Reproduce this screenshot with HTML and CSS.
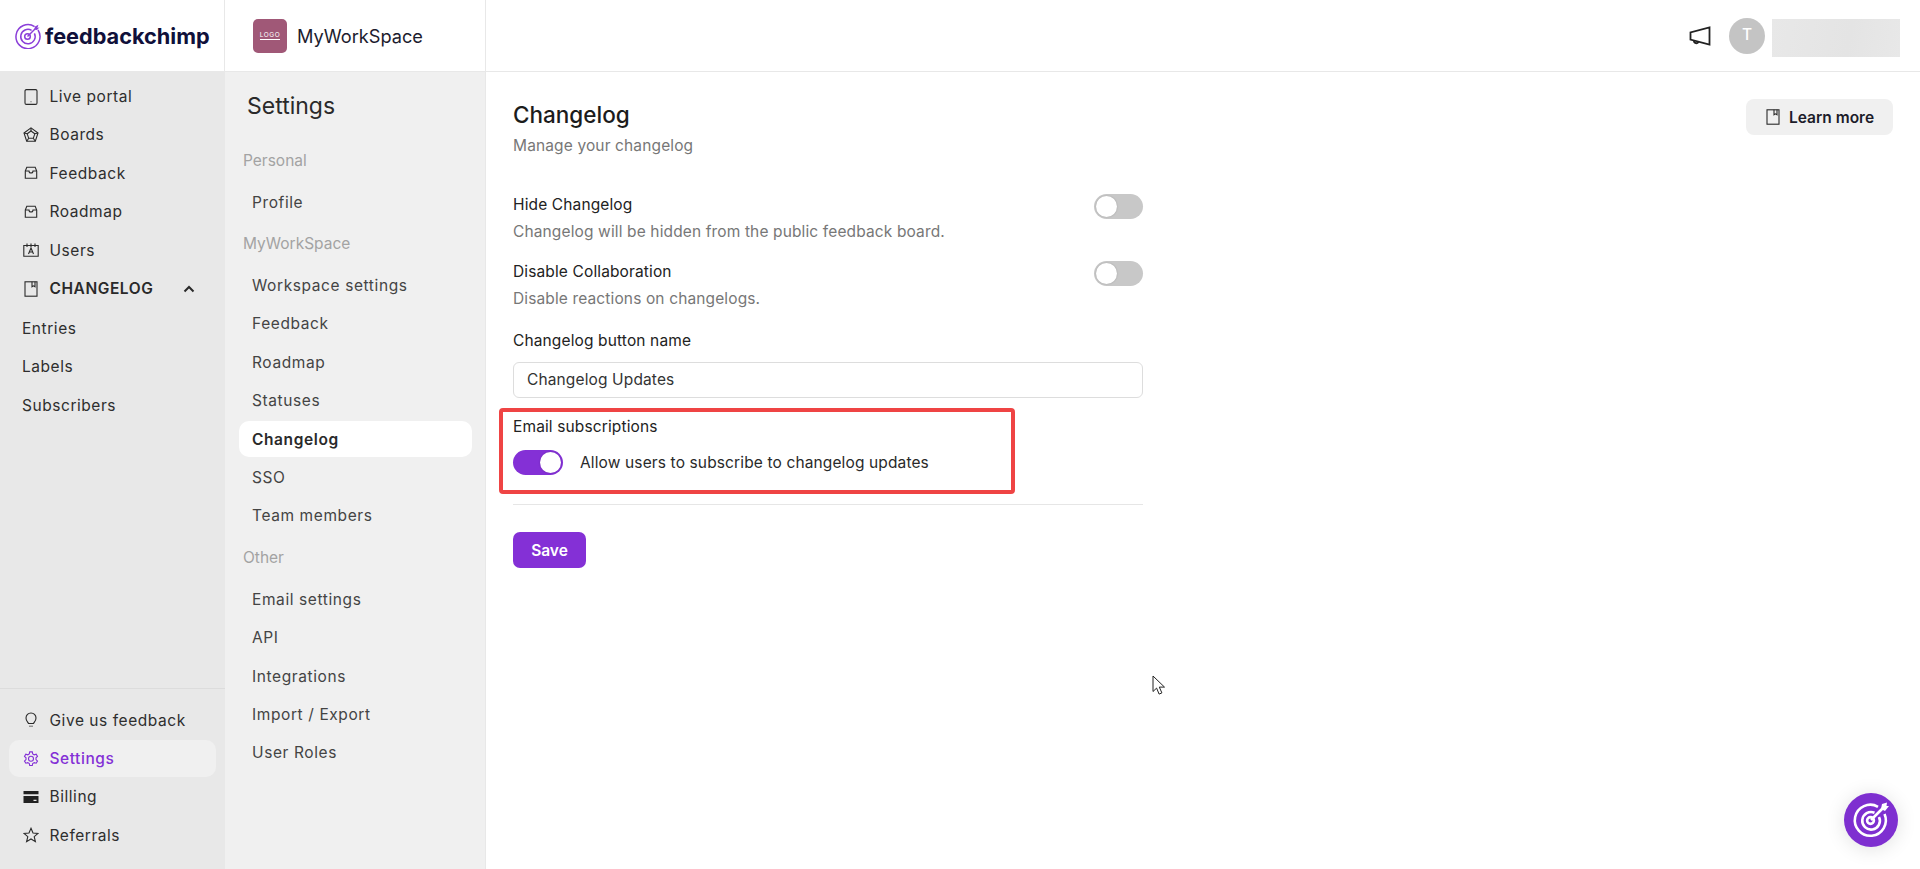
FILE: index.html
```html
<!DOCTYPE html>
<html lang="en">
<head>
<meta charset="utf-8">
<title>Settings - Changelog</title>
<link rel="stylesheet" href="styles.css">
</head>
<body>
<div class="app">
  <aside class="rail">
    <div class="brand">
      <svg class="brand-icon" viewBox="0 0 26 26" fill="none" stroke="#8b3fd9">
        <path d="M19.6 3.6A12 12 0 1 0 23 7" stroke-width="1.5"/>
        <path d="M16.6 7.4A7.2 7.2 0 1 0 19.4 10.4" stroke-width="1.5"/>
        <circle cx="12.5" cy="13.5" r="2.8" stroke-width="1.5"/>
        <path d="M12.5 13.5 21 5" stroke-width="1.5"/>
        <path d="M20 3.4 23.4 1.8 22.4 5 24.6 4.2 22 7 19.4 6.6Z" fill="#8b3fd9" stroke="none"/>
      </svg>
      <span class="brand-name">feedbackchimp</span>
    </div>
    <nav class="rail-nav">
      <a class="rail-item"><svg class="ic" viewBox="0 0 16 16"><rect x="2" y="0.600" width="12" height="14.800" rx="1.400"/><path d="M7.600 12.800h.8"/></svg>Live portal</a>
      <a class="rail-item"><svg class="ic" viewBox="0 0 16 16"><path d="M8 .9 15 6l-2.700 8.200H3.700L1 6Z"/><path d="M8 4 11.800 6.800 10.300 11.300H5.700L4.200 6.800Z"/><path d="M8 .9V4M15 6 11.800 6.800M12.300 14.200 10.300 11.300M3.700 14.200 5.700 11.300M1 6 4.200 6.800"/></svg>Boards</a>
      <a class="rail-item"><svg class="ic" viewBox="0 0 16 16"><path d="M2.300 6 3.800 2.200h8.400L13.700 6v7.300H2.300Z"/><path d="M2.300 6H6a2 2 0 0 0 4 0h3.700"/></svg>Feedback</a>
      <a class="rail-item"><svg class="ic" viewBox="0 0 16 16"><path d="M2.300 6 3.800 2.200h8.400L13.700 6v7.300H2.300Z"/><path d="M2.300 6H6a2 2 0 0 0 4 0h3.700"/></svg>Roadmap</a>
      <a class="rail-item"><svg class="ic" viewBox="0 0 16 16"><path d="M.8 3.500h14.400v10.800H.8Z"/><path d="M4 1.500v3.500M8 1.500v3.500M12 1.500v3.500"/><path d="M5.500 12 8 6l2.500 6M6.400 10h3.200"/></svg>Users</a>
      <a class="rail-item rail-head"><svg class="ic" viewBox="0 0 16 16"><rect x="2" y="0.800" width="12" height="14.400"/><path d="M9 .8v5l1.500-1 1.500 1v-5"/></svg>CHANGELOG<svg class="chev" viewBox="0 0 12 8"><path d="M1.500 6.500 6 2l4.500 4.500"/></svg></a>
      <a class="rail-item rail-sub rail-sub-first">Entries</a>
      <a class="rail-item rail-sub">Labels</a>
      <a class="rail-item rail-sub">Subscribers</a>
    </nav>
    <nav class="rail-nav rail-bottom">
      <a class="rail-item"><svg class="ic" viewBox="0 0 16 16"><path d="M5.500 11.500C4.800 10 3 9 3 6a5 5 0 0 1 10 0c0 3-1.800 4-2.500 5.500Z"/><path d="M6 14.200h4" stroke="#777"/></svg>Give us feedback</a>
      <a class="rail-item is-active"><svg class="ic" viewBox="0 0 16 16"><path d="M6.700.9h2.600l.4 2 1.500.9 2-.6 1.300 2.200-1.500 1.400v1.800l1.500 1.400-1.300 2.200-2-.6-1.500.9-.4 2H6.700l-.4-2-1.500-.9-2 .6-1.300-2.200 1.500-1.400V6.800L1.500 5.400l1.300-2.200 2 .6 1.500-.9Z"/><circle cx="8" cy="7.700" r="2.500"/></svg>Settings</a>
      <a class="rail-item"><svg class="ic ic-fill" viewBox="0 0 16 16"><path d="M.5 2h15v3.300H.5ZM.5 7h15v7H.5Zm10 3.800v1.200h3v-1.200Z" fill-rule="evenodd"/></svg>Billing</a>
      <a class="rail-item"><svg class="ic" viewBox="0 0 16 16"><path d="M8 1.300 10 6l5 .4-3.800 3.300 1.200 5L8 12l-4.400 2.700 1.200-5L1 6.400 6 6Z"/></svg>Referrals</a>
    </nav>
  </aside>

  <aside class="panel">
    <div class="workspace">
      <div class="ws-logo"><span class="ws-logo-text">LOGO</span></div>
      <span class="ws-name">MyWorkSpace</span>
    </div>
    <div class="panel-body">
      <h2 class="panel-title">Settings</h2>
      <div class="panel-section">Personal</div>
      <a class="panel-item">Profile</a>
      <div class="panel-section">MyWorkSpace</div>
      <a class="panel-item">Workspace settings</a>
      <a class="panel-item">Feedback</a>
      <a class="panel-item">Roadmap</a>
      <a class="panel-item">Statuses</a>
      <a class="panel-item is-active">Changelog</a>
      <a class="panel-item">SSO</a>
      <a class="panel-item">Team members</a>
      <div class="panel-section">Other</div>
      <a class="panel-item">Email settings</a>
      <a class="panel-item">API</a>
      <a class="panel-item">Integrations</a>
      <a class="panel-item">Import / Export</a>
      <a class="panel-item">User Roles</a>
    </div>
  </aside>

  <div class="content">
    <header class="topbar">
      <svg class="megaphone" viewBox="0 0 22 20"><path d="M20.500 1.500v17L1.500 13.500V6.500Z"/><path d="M5 14.500a2.400 2.400 0 0 0 4.600 1.200"/></svg>
      <div class="avatar">T</div>
      <div class="user-blur"></div>
    </header>
    <main class="main">
      <div class="page-head">
        <div>
          <h1 class="page-title">Changelog</h1>
          <p class="page-sub">Manage your changelog</p>
        </div>
        <button class="learn"><svg class="ic" viewBox="0 0 16 16"><rect x="2" y="0.800" width="12" height="14.400"/><path d="M9 .8v5l1.500-1 1.500 1v-5"/></svg>Learn more</button>
      </div>
      <form class="form">
        <div class="setting">
          <div>
            <div class="label">Hide Changelog</div>
            <div class="desc">Changelog will be hidden from the public feedback board.</div>
          </div>
          <span class="toggle"></span>
        </div>
        <div class="setting">
          <div>
            <div class="label">Disable Collaboration</div>
            <div class="desc">Disable reactions on changelogs.</div>
          </div>
          <span class="toggle"></span>
        </div>
        <div class="label field-label">Changelog button name</div>
        <div class="input">Changelog Updates</div>
        <div class="email">
          <div class="label">Email subscriptions</div>
          <div class="email-row">
            <span class="toggle is-on"></span>
            <span class="email-text">Allow users to subscribe to changelog updates</span>
          </div>
          <div class="highlight"></div>
        </div>
        <hr class="divider">
        <button class="save" type="button">Save</button>
      </form>
    </main>
  </div>
</div>
<svg class="cursor" viewBox="0 0 14 21"><path d="M1 1v15.500l3.600-3.400 2.500 6 2.800-1.200-2.600-5.800H12.500Z"/></svg>
<div class="chat">
  <svg viewBox="0 0 54 54" fill="none" stroke="#fff" stroke-width="2.600">
    <path d="M34 13.800A15.500 15.500 0 1 0 40.500 21"/>
    <path d="M30.500 19.700A8.800 8.800 0 1 0 35 24"/>
    <circle cx="26.500" cy="27.500" r="3.400"/>
    <path d="M27 27 39 15"/>
    <path d="M38 11 43 9.500 42.500 13 45 13 41 18 37 16Z" fill="#fff" stroke="none"/>
  </svg>
</div>
</body>
</html>
```

FILE: styles.css
```css
* { box-sizing: border-box; }
html, body { margin: 0; height: 100%; overflow: hidden; }
body {
  font-family: Inter, "Noto Sans", sans-serif;
  color: #2a2a2a;
  background: #fff;
}
.app { display: flex; height: 869px; }

/* Left rail */
.rail { width: 225px; flex: none; display: flex; flex-direction: column; background: #e8e8e8; }
.brand {
  height: 72px; flex: none; display: flex; align-items: center; gap: 4px;
  padding-left: 15px; background: #fff; border-bottom: 1px solid #e8e8e8; border-right: 1px solid #e8e8e8;
}
.brand-icon { width: 26px; height: 26px; flex: none; }
.brand-name { font-size: 21.700px; font-weight: 700; color: #10103a; letter-spacing: 0; }
.rail-nav { display: flex; flex-direction: column; gap: 2px; padding: 6.400px 9px 0; }
.rail-bottom { margin-top: auto; border-top: 1px solid #dcdcdc; padding-top: 13px; padding-bottom: 15.500px; }
.rail-item {
  height: 36.400px; display: flex; align-items: center; gap: 10.500px; padding-left: 14px;
  font-size: 15.500px; letter-spacing: .55px; color: #2e2e2e; border-radius: 10px;
}
.rail-head { font-weight: 600; color: #2a2a2a; }
.rail-sub { padding-left: 13px; }
.rail-sub-first { margin-top: 1.600px; }
.rail-item.is-active { background: #f0f0f0; color: #8430d6; font-weight: 500; }
.rail-item.is-active .ic { stroke: #8430d6; }
.ic { width: 16px; height: 16px; flex: none; fill: none; stroke: #2a2a2a; stroke-width: 1.100; }
.ic-fill { fill: #222; stroke: none; }
.chev { width: 12px; height: 8px; margin-left: 19px; fill: none; stroke: #2a2a2a; stroke-width: 2; }

/* Settings panel */
.panel { width: 261px; flex: none; display: flex; flex-direction: column; background: #f0f0f0; border-right: 1px solid #e8e8e8; }
.workspace {
  height: 72px; flex: none; display: flex; align-items: center; gap: 10px; padding-left: 28px;
  background: #fff; border-bottom: 1px solid #e8e8e8;
}
.ws-logo { width: 34px; height: 34px; border-radius: 5px; background: #a05877; display: flex; align-items: center; justify-content: center; }
.ws-logo-text { font-size: 6.500px; letter-spacing: .6px; color: #fff; border-bottom: 1px solid #fff; line-height: 7px; }
.ws-name { font-size: 18.200px; color: #1c1c2e; }
.panel-body { padding: 18px 13.500px 0 14px; display: flex; flex-direction: column; }
.panel-title { margin: 0 0 21px 8px; font-size: 23px; font-weight: 400; line-height: 32px; color: #2a2a2a; }
.panel-section { height: 34px; margin-top: 4px; margin-bottom: 7px; padding-left: 4px; display: flex; align-items: center; font-size: 15.500px; color: #a3a3a3; }
.panel-section:first-of-type { margin-top: 0; }
.panel-item {
  height: 36.400px; margin-bottom: 2px; padding-left: 13px; display: flex; align-items: center;
  font-size: 15.500px; letter-spacing: .6px; color: #444; border-radius: 10px;
}
.panel-item.is-active { background: #fff; color: #2a2a2a; font-weight: 600; }

/* Content */
.content { flex: 1; min-width: 0; display: flex; flex-direction: column; }
.topbar {
  height: 72px; flex: none; display: flex; align-items: center; justify-content: flex-end;
  padding-right: 20px; border-bottom: 1px solid #e8e8e8;
}
.megaphone { width: 22px; height: 20px; margin-right: 18px; fill: none; stroke: #222; stroke-width: 1.800; }
.avatar { width: 36px; height: 36px; padding-bottom: 2px; border-radius: 50%; background: #c4c4c4; color: #fff; display: flex; align-items: center; justify-content: center; font-size: 15.500px; font-weight: 500; margin-right: 7px; }
.user-blur { width: 128px; height: 38px; background: linear-gradient(100deg, #e8e8e8, #e4e4e4 60%, #e8e8e8); margin-top: 4px; }
.main { padding: 27px 27px 0 27px; }
.page-head { display: flex; justify-content: space-between; align-items: flex-start; }
.page-title { margin: 0; font-size: 22.500px; font-weight: 500; line-height: 32px; color: #1c1c1c; }
.page-sub { margin: 2.500px 0 0; font-size: 15.500px; letter-spacing: .13px; line-height: 24px; color: #777; }
.learn {
  width: 147px; height: 36px; display: flex; align-items: center; gap: 8px; padding: 0 0 0 19px; border: 0;
  border-radius: 8px; background: #f0f0f0; font-family: inherit; font-size: 15.500px; font-weight: 600; color: #1c1c2a;
}
.form { width: 630px; margin-top: 37px; }
.setting { display: flex; justify-content: space-between; align-items: flex-start; margin-bottom: 20.500px; }
.label { font-size: 15.500px; letter-spacing: .13px; line-height: 20px; color: #222; }
.desc { font-size: 15.500px; letter-spacing: .13px; line-height: 20px; margin-top: 7px; color: #777; }
.toggle { width: 49.500px; height: 25px; margin-top: -1px; border-radius: 13px; background: #c8c8c8; position: relative; flex: none; }
.toggle::after { content: ""; position: absolute; left: 2px; top: 2px; width: 21px; height: 21px; border-radius: 50%; background: #fff; box-shadow: 0 0 2px rgba(0,0,0,.2); }
.toggle.is-on { background: #8430d6; margin-top: 0; }
.toggle.is-on::after { left: 26.500px; }
.field-label { margin-top: 21.500px; }
.input {
  height: 36px; margin-top: 11px; padding-left: 13px; display: flex; align-items: center;
  border: 1px solid #ddd; border-radius: 6px; font-size: 15.500px; letter-spacing: .13px; color: #333; background: #fff;
}
.email { position: relative; margin-top: 19.500px; }
.email-row { display: flex; align-items: center; gap: 17.500px; margin-top: 13px; }
.email-text { font-size: 15.500px; letter-spacing: .13px; color: #2a2a2a; }
.highlight { position: absolute; left: -14px; top: -9.500px; width: 516px; height: 86px; border: 4px solid #ef4444; border-radius: 4px; }
.divider { margin: 29px 0 0; border: 0; border-top: 1px solid #e6e6e6; }
.save {
  width: 73px; height: 36px; margin-top: 27px; border: 0; border-radius: 7px; background: #8430d6; color: #fff;
  font-family: inherit; font-size: 15.500px; font-weight: 600;
}
.cursor { position: fixed; left: 1152px; top: 675px; width: 14px; height: 21px; fill: #fff; stroke: #222; stroke-width: 1; }
.chat {
  position: fixed; left: 1844px; top: 793px; width: 54px; height: 54px; border-radius: 50%;
  background: #7e2fd0; box-shadow: 0 2px 20px rgba(0,0,0,.12);
}
.chat svg { display: block; width: 54px; height: 54px; }
```
